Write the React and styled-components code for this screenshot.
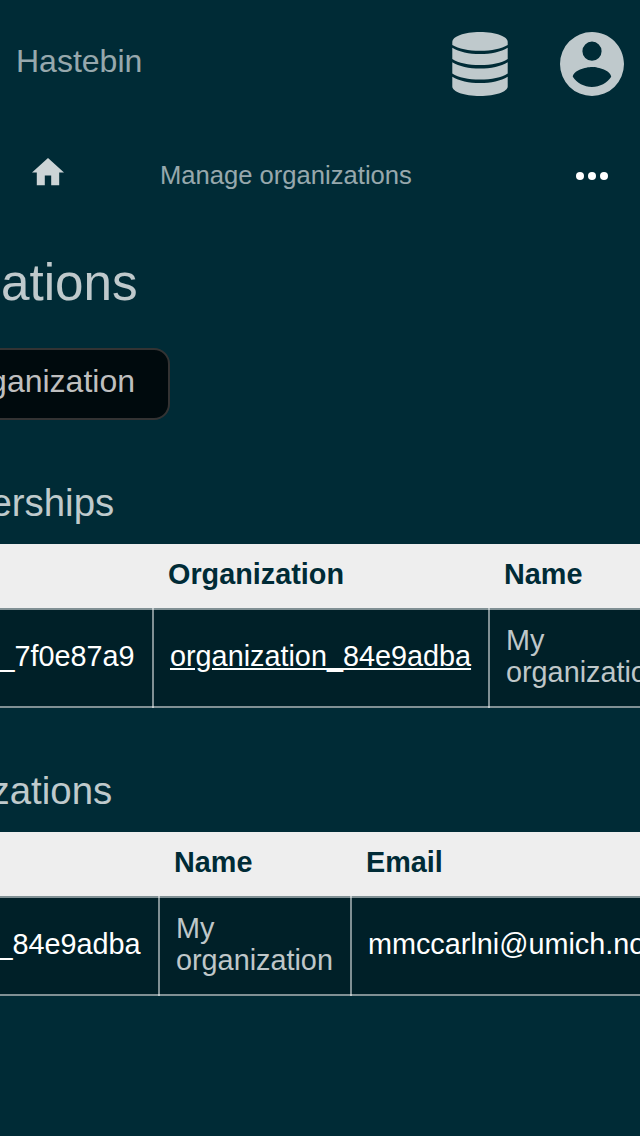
import React from "react";
import styled, { createGlobalStyle } from "styled-components";

const GlobalStyle = createGlobalStyle`
  *, *::before, *::after { box-sizing: border-box; }
  body {
    margin: 0;
    overflow: hidden;
    background: #002b36;
    font-family: "Liberation Sans", Arial, sans-serif;
    color: rgba(255, 255, 255, 0.75);
  }
`;

const Page = styled.div`
  display: flex;
  flex-direction: column;
  width: 640px;
  height: 1136px;
  overflow: hidden;
`;

const Header = styled.header`
  display: flex;
  align-items: center;
  height: 128px;
  padding: 0 16px;
`;

const Brand = styled.span`
  flex: 1;
  padding-bottom: 7px;
  font-size: 32px;
  line-height: 36px;
  color: rgba(255, 255, 255, 0.6);
`;

const HeaderIcon = styled.svg`
  display: block;
  width: ${(p) => p.$width}px;
  height: 64px;
  margin-left: 52px;
  fill: currentColor;
`;

const Nav = styled.nav`
  display: flex;
  align-items: center;
  height: 96px;
  padding: 0 32px;
`;

const HomeIcon = styled.svg`
  display: block;
  width: 32px;
  height: 28px;
  margin-bottom: 8px;
  fill: rgba(255, 255, 255, 0.8);
`;

const NavTitle = styled.span`
  flex: 1;
  margin-left: 96px;
  padding-bottom: 2px;
  font-size: 25.6px;
  line-height: 30px;
  color: rgba(255, 255, 255, 0.6);
`;

const MoreIcon = styled.svg`
  display: block;
  width: 32px;
  height: 8px;
  fill: #fff;
`;

const Clip = styled.div`
  display: flex;
  justify-content: flex-end;
  width: ${(p) => p.$width}px;
  white-space: nowrap;
`;

const Title = styled.h1`
  margin: 29px 0 0;
  font-size: 51.2px;
  line-height: 60px;
  font-weight: 400;
`;

const Button = styled.button`
  height: 72px;
  margin: 35px 0 0;
  padding: 0 33px 6px 32px;
  border: 2px solid #333;
  border-radius: 16px;
  background: #000a0d;
  color: #bfbfbf;
  font: 32px "Liberation Sans", Arial, sans-serif;
`;

const SectionTitle = styled.h2`
  margin: ${(p) => p.$top}px 0 0;
  height: 64px;
  font-size: 38.4px;
  line-height: 46px;
  font-weight: 400;
`;

const Table = styled.div`
  display: flex;
  flex-direction: column;
  font-size: 28.8px;
  line-height: 32px;
`;

const HeadRow = styled.div`
  display: grid;
  grid-template-columns: ${(p) => p.$columns};
  height: 64px;
  background: #eee;
  color: #002b36;
  font-weight: 700;
`;

const HeadCell = styled.div`
  padding: 14px 16px 0;
`;

const Row = styled.div`
  display: grid;
  grid-template-columns: ${(p) => p.$columns};
  height: 100px;
  border: solid rgba(255, 255, 255, 0.5);
  border-width: 2px 0;
  background: #002028;
`;

const Cell = styled.div`
  display: flex;
  align-items: center;
  justify-content: ${(p) => (p.$end ? "flex-end" : "flex-start")};
  min-width: 0;
  margin: -2px 0;
  padding: 0 ${(p) => (p.$end ? 17.4 : 16)}px 4px 16px;
  border-left: ${(p) => (p.$end ? "0" : "2px solid rgba(255, 255, 255, 0.5)")};
  color: ${(p) => (p.$muted ? "inherit" : "#fff")};
`;

const Link = styled.a`
  color: #fff;
  text-decoration: underline;
`;

const membershipColumns = "152px 336px 192px";
const organizationColumns = "158px 192px 400px";

export default function App() {
  return (
    <>
      <GlobalStyle />
      <Page>
        <Header>
          <Brand>Hastebin</Brand>
          <HeaderIcon $width={56} viewBox="0 0 56 64">
            <path d="M.3 10C.3 4.5 12 0 28 0S55.7 4.5 55.7 10V13C49.5 16.8 39.5 18.8 28 18.8S6.500 16.8.3 13Z" />
            <path d="M.3 15.700C7 19.800 17 22 28 22S49 19.800 55.700 15.700V27C49.500 31 39.500 33.100 28 33.100S6.500 31 .3 27Z" />
            <path d="M.3 30.300C7 34.400 17 36.600 28 36.600S49 34.400 55.700 30.300V41.500C49.500 45.500 39.500 47.600 28 47.600S6.500 45.500 .3 41.500Z" />
            <path d="M.3 44.800C7 48.900 17 51.100 28 51.100S49 48.900 55.700 44.800V54.500C55.700 59.500 44 64 28 64S.3 59.500 .3 54.500Z" />
          </HeaderIcon>
          <HeaderIcon $width={64} viewBox="2 2 20 20">
            <path d="M12,19.2C9.5,19.2 7.29,17.92 6,16C6.03,14 10,12.9 12,12.9C14,12.9 17.97,14 18,16C16.71,17.92 14.5,19.2 12,19.2M12,5A3,3 0 0,1 15,8A3,3 0 0,1 12,11A3,3 0 0,1 9,8A3,3 0 0,1 12,5M12,2A10,10 0 0,0 2,12A10,10 0 0,0 12,22A10,10 0 0,0 22,12C22,6.47 17.5,2 12,2Z" />
          </HeaderIcon>
        </Header>
        <Nav>
          <HomeIcon viewBox="2 3 20 17.5">
            <path d="M10,20V14H14V20H19V12H22L12,3L2,12H5V20H10Z" />
          </HomeIcon>
          <NavTitle>Manage organizations</NavTitle>
          <MoreIcon viewBox="0 0 32 8">
            <circle cx="4" cy="4" r="4" />
            <circle cx="16" cy="4" r="4" />
            <circle cx="28" cy="4" r="4" />
          </MoreIcon>
        </Nav>
        <Clip $width={137.6}>
          <Title>Organizations</Title>
        </Clip>
        <Clip $width={170}>
          <Button>Create organization</Button>
        </Clip>
        <Clip $width={114.2}>
          <SectionTitle $top={60}>Memberships</SectionTitle>
        </Clip>
        <Table>
          <HeadRow $columns={membershipColumns}>
            <HeadCell />
            <HeadCell>Organization</HeadCell>
            <HeadCell>Name</HeadCell>
          </HeadRow>
          <Row $columns={membershipColumns}>
            <Cell $end>membership_7f0e87a9</Cell>
            <Cell>
              <Link>organization_84e9adba</Link>
            </Cell>
            <Cell $muted>My organization</Cell>
          </Row>
        </Table>
        <Clip $width={112.2}>
          <SectionTitle $top={60}>Organizations</SectionTitle>
        </Clip>
        <Table>
          <HeadRow $columns={organizationColumns}>
            <HeadCell />
            <HeadCell>Name</HeadCell>
            <HeadCell>Email</HeadCell>
          </HeadRow>
          <Row $columns={organizationColumns}>
            <Cell $end>organization_84e9adba</Cell>
            <Cell $muted>My organization</Cell>
            <Cell>mmccarlni@umich.nomail</Cell>
          </Row>
        </Table>
      </Page>
    </>
  );
}
